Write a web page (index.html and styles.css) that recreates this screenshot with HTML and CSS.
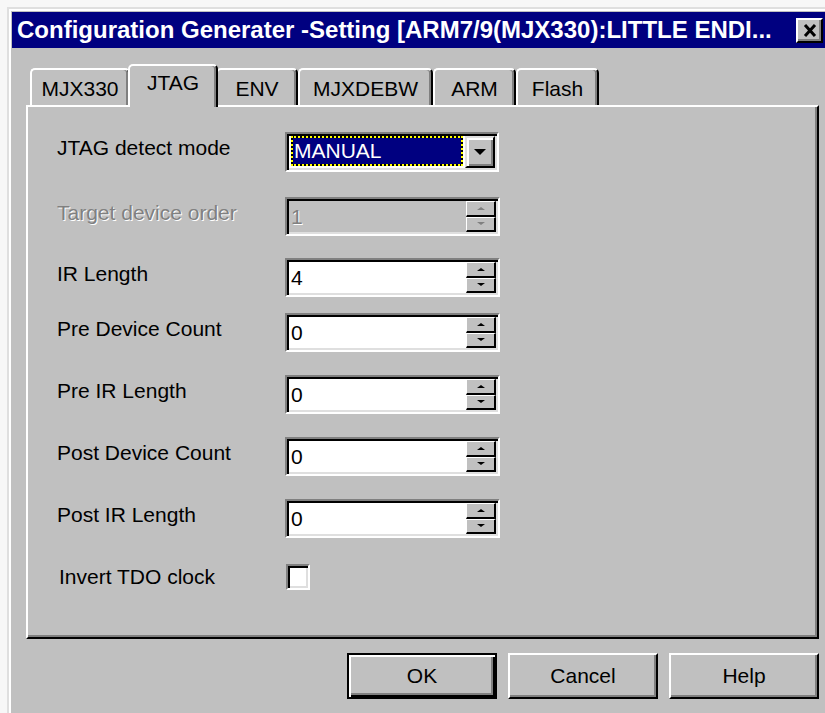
FILE: index.html
```html
<!DOCTYPE html>
<html lang="en">
<head>
<meta charset="utf-8">
<title>Configuration Generater</title>
<link rel="stylesheet" href="styles.css">
</head>
<body>
<div class="window">
  <div class="titlebar">
    <span class="title">Configuration Generater -Setting [ARM7/9(MJX330):LITTLE ENDI...</span>
    <span class="close-btn">
      <svg width="14" height="13" viewBox="0 0 14 13"><path d="M2 1 L12 12 M12 1 L2 12" stroke="#000" stroke-width="3" fill="none"/></svg>
    </span>
  </div>
  <div class="client">
    <div class="tabs">
      <div class="tab">MJX330</div>
      <div class="tab active">JTAG</div>
      <div class="tab">ENV</div>
      <div class="tab">MJXDEBW</div>
      <div class="tab">ARM</div>
      <div class="tab">Flash</div>
    </div>
    <div class="panel">
      <div class="row">
        <div class="label">JTAG detect mode</div>
        <div class="combo">
          <div class="combo-value"><span>MANUAL</span></div>
          <div class="drop-btn"><span class="arrow-down-lg"></span></div>
        </div>
      </div>
      <div class="row gap-25 disabled">
        <div class="label">Target device order</div>
        <div class="field">
          <div class="value">1</div>
          <div class="spin">
            <div class="spin-btn"><span class="arrow-up"></span></div>
            <div class="spin-btn"><span class="arrow-down"></span></div>
          </div>
        </div>
      </div>
      <div class="row gap-22">
        <div class="label">IR Length</div>
        <div class="field">
          <div class="value">4</div>
          <div class="spin">
            <div class="spin-btn"><span class="arrow-up"></span></div>
            <div class="spin-btn"><span class="arrow-down"></span></div>
          </div>
        </div>
      </div>
      <div class="row gap-16">
        <div class="label">Pre Device Count</div>
        <div class="field">
          <div class="value">0</div>
          <div class="spin">
            <div class="spin-btn"><span class="arrow-up"></span></div>
            <div class="spin-btn"><span class="arrow-down"></span></div>
          </div>
        </div>
      </div>
      <div class="row gap-23">
        <div class="label">Pre IR Length</div>
        <div class="field">
          <div class="value">0</div>
          <div class="spin">
            <div class="spin-btn"><span class="arrow-up"></span></div>
            <div class="spin-btn"><span class="arrow-down"></span></div>
          </div>
        </div>
      </div>
      <div class="row gap-23">
        <div class="label">Post Device Count</div>
        <div class="field">
          <div class="value">0</div>
          <div class="spin">
            <div class="spin-btn"><span class="arrow-up"></span></div>
            <div class="spin-btn"><span class="arrow-down"></span></div>
          </div>
        </div>
      </div>
      <div class="row gap-23">
        <div class="label">Post IR Length</div>
        <div class="field">
          <div class="value">0</div>
          <div class="spin">
            <div class="spin-btn"><span class="arrow-up"></span></div>
            <div class="spin-btn"><span class="arrow-down"></span></div>
          </div>
        </div>
      </div>
      <div class="row gap-26">
        <div class="label label-check">Invert TDO clock</div>
        <div class="check"></div>
      </div>
    </div>
    <div class="buttons">
      <div class="btn default">OK</div>
      <div class="btn">Cancel</div>
      <div class="btn">Help</div>
    </div>
  </div>
</div>
</body>
</html>
```

FILE: styles.css
```css
html, body {
  margin: 0;
  padding: 0;
}

body {
  width: 825px;
  height: 713px;
  overflow: hidden;
  background: #f7f7f7;
  font-family: "Liberation Sans", Arial, sans-serif;
  font-size: 21px;
  color: #000;
}

/* dialog frame */
.window {
  box-sizing: border-box;
  margin: 7px 0 0 7px;
  width: 826px;
  height: 720px;
  padding: 3px;
  background: #c0c0c0;
  border: 2px solid;
  border-color: #dfdfdf #000 #000 #dfdfdf;
  box-shadow: inset 2px 2px #fff, inset -2px -2px #808080;
}

.titlebar {
  height: 36px;
  background: #000080;
  color: #fff;
  display: flex;
  align-items: center;
  padding-left: 5px;
}

.title {
  font-weight: bold;
  font-size: 24px;
  white-space: nowrap;
}

.close-btn {
  box-sizing: border-box;
  width: 27px;
  height: 25px;
  margin-left: auto;
  margin-right: 5px;
  margin-top: 1px;
  background: #c0c0c0;
  border: 2px solid;
  border-color: #fff #000 #000 #fff;
  box-shadow: inset -2px -2px #808080;
  display: flex;
  align-items: center;
  justify-content: center;
}

.client {
  padding: 16px 0 0 14px;
}

/* tab strip */
.tabs {
  display: grid;
  grid-template-columns: 100px 86px 82px 135px 83px 83px;
  align-items: end;
  height: 41px;
  padding-left: 4px;
}

.tab {
  box-sizing: border-box;
  height: 37px;
  border: 2px solid;
  border-bottom: 0;
  border-color: #fff #000 transparent #fff;
  border-radius: 5px 5px 0 0;
  box-shadow: inset -2px 0 #808080;
  display: flex;
  align-items: center;
  justify-content: center;
  padding-top: 2px;
  white-space: nowrap;
}

.tab.active {
  position: relative;
  z-index: 1;
  height: 43px;
  margin: 0 -2px -2px;
  padding-top: 0;
  padding-bottom: 8px;
  background: #c0c0c0;
}

/* tab page */
.panel {
  box-sizing: border-box;
  width: 793px;
  height: 534px;
  border: 2px solid;
  border-color: #fff #000 #000 #fff;
  box-shadow: inset -2px -2px #808080;
  padding: 25px 0 0 29px;
}

.row {
  display: flex;
  align-items: center;
}

.gap-16 { margin-top: 16px; }
.gap-22 { margin-top: 22px; }
.gap-23 { margin-top: 23px; }
.gap-25 { margin-top: 25px; }
.gap-26 { margin-top: 26px; }

.label {
  box-sizing: border-box;
  width: 228px;
  padding-bottom: 8px;
  white-space: nowrap;
}

.label-check {
  padding-left: 2px;
  padding-bottom: 0;
}

.disabled .label,
.disabled .value {
  color: #808080;
  text-shadow: 1px 1px 0 #fff;
}

/* sunken edit with spinner */
.field,
.combo,
.check {
  box-sizing: border-box;
  background: #fff;
  border: 2px solid;
  border-color: #808080 #fff #fff #808080;
  box-shadow: inset 2px 2px #000, inset -2px -2px #dfdfdf;
}

.field {
  width: 215px;
  height: 39px;
  padding: 2px;
  display: flex;
}

.disabled .field {
  background: #c0c0c0;
}

.value {
  flex: 1;
  line-height: 31px;
  padding-left: 2px;
}

.spin {
  width: 30px;
  display: flex;
  flex-direction: column;
}

.spin-btn {
  flex: 1;
  box-sizing: border-box;
  background: #c0c0c0;
  border-style: solid;
  border-width: 1px 2px 2px 1px;
  border-color: #fff #000 #000 #fff;
  display: flex;
  align-items: center;
  justify-content: center;
}

.arrow-up,
.arrow-down {
  width: 0;
  height: 0;
  border-left: 4px solid transparent;
  border-right: 4px solid transparent;
}

.arrow-up { border-bottom: 3px solid #000; }
.arrow-down { border-top: 3px solid #000; }

.disabled .arrow-up { border-bottom-color: #808080; }
.disabled .arrow-down { border-top-color: #808080; }

/* drop-down list */
.combo {
  width: 214px;
  height: 40px;
  padding: 2px;
  display: flex;
}

.combo-value {
  flex: 1;
  margin: 0 2px 2px 2px;
  border: 2px dotted #ffff00;
  background: linear-gradient(#000080, #000080) padding-box, linear-gradient(#000, #000) border-box;
  color: #fff;
  display: flex;
  align-items: center;
  padding-left: 1px;
}

.drop-btn {
  box-sizing: border-box;
  width: 30px;
  height: 32px;
  background: #c0c0c0;
  border: 2px solid;
  border-color: #dfdfdf #000 #000 #dfdfdf;
  box-shadow: inset 2px 2px #fff, inset -2px -2px #808080;
  display: flex;
  align-items: center;
  justify-content: center;
}

.arrow-down-lg {
  width: 0;
  height: 0;
  border-left: 6px solid transparent;
  border-right: 6px solid transparent;
  border-top: 6px solid #000;
}

.check {
  width: 24px;
  height: 26px;
  margin-left: 1px;
}

/* dialog buttons */
.buttons {
  width: 793px;
  margin-top: 14px;
  display: flex;
  justify-content: flex-end;
  gap: 11px;
}

.btn {
  box-sizing: border-box;
  width: 150px;
  height: 46px;
  background: #c0c0c0;
  border: 2px solid;
  border-color: #fff #000 #000 #fff;
  box-shadow: inset -2px -2px #808080;
  display: flex;
  align-items: center;
  justify-content: center;
}

.btn.default {
  border-color: #000;
  box-shadow: inset 2px 2px #fff, inset -2px -2px #000, inset -4px -4px #808080;
}
```
